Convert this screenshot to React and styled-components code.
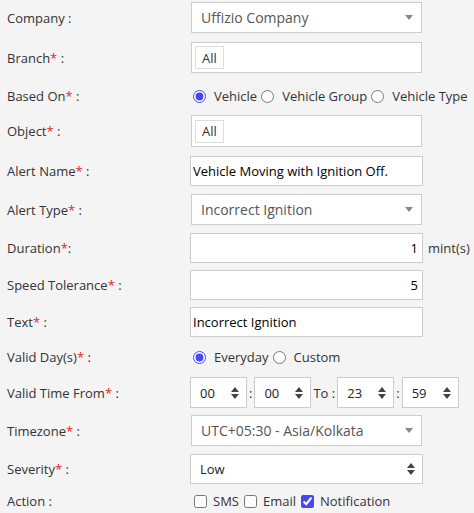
import React from 'react';
import styled, { createGlobalStyle } from 'styled-components';

const GlobalStyle = createGlobalStyle`
  html, body {
    margin: 0;
    padding: 0;
    background: #f4f4f4;
  }
  body {
    font-family: "Open Sans", "Liberation Sans", sans-serif;
    color: #333;
  }
`;

const Caret = () => (
  <svg width="8" height="5" viewBox="0 0 8 5">
    <path d="M0 0h8L4 5z" fill="#888" />
  </svg>
);

const UpDown = () => (
  <svg width="8" height="12" viewBox="0 0 8 12">
    <path d="M4 0l4 5H0z M4 12L0 7h8z" fill="#444" />
  </svg>
);

const Label = ({ children, req, tight }) => (
  <LabelCell>
    {children}
    {req && <Star>*</Star>}
    {tight ? ':' : ' :'}
  </LabelCell>
);

export default function App() {
  return (
    <>
      <GlobalStyle />
      <Form>
        <Row $h={31} $mb={9}>
          <Label>Company</Label>
          <SelectBox>
            <span>Uffizio Company</span>
            <Caret />
          </SelectBox>
        </Row>

        <Row $h={31} $mb={13}>
          <Label req>Branch</Label>
          <TagBox>
            <Tag>All</Tag>
          </TagBox>
        </Row>

        <Row $h={20} $mb={9}>
          <Label req>Based On</Label>
          <Choices>
            <Choice><Radio type="radio" name="based" defaultChecked />Vehicle</Choice>
            <Choice><Radio type="radio" name="based" />Vehicle Group</Choice>
            <Choice><Radio type="radio" name="based" />Vehicle Type</Choice>
          </Choices>
        </Row>

        <Row $h={32} $mb={9}>
          <Label req>Object</Label>
          <TagBox>
            <Tag>All</Tag>
          </TagBox>
        </Row>

        <Row $h={30} $mb={8}>
          <Label req>Alert Name</Label>
          <TextInput defaultValue="Vehicle Moving with Ignition Off." />
        </Row>

        <Row $h={31} $mb={8}>
          <Label req>Alert Type</Label>
          <SelectBox>
            <span>Incorrect Ignition</span>
            <Caret />
          </SelectBox>
        </Row>

        <Row $h={30} $mb={7}>
          <Label req tight>Duration</Label>
          <TextInput $right defaultValue="1" />
          <Unit>mint(s)</Unit>
        </Row>

        <Row $h={30} $mb={7}>
          <Label req>Speed Tolerance</Label>
          <TextInput $right defaultValue="5" />
        </Row>

        <Row $h={30} $mb={10}>
          <Label req>Text</Label>
          <TextInput defaultValue="Incorrect Ignition" />
        </Row>

        <Row $h={20} $mb={10}>
          <Label req>Valid Day(s)</Label>
          <Choices>
            <Choice><Radio type="radio" name="day" defaultChecked />Everyday</Choice>
            <Choice><Radio type="radio" name="day" />Custom</Choice>
          </Choices>
        </Row>

        <Row $h={31} $mb={7}>
          <Label req>Valid Time From</Label>
          <TimeGroup>
            <TimeBox><span>00</span><UpDown /></TimeBox>
            <Sep>:</Sep>
            <TimeBox><span>00</span><UpDown /></TimeBox>
            <Sep>To :</Sep>
            <TimeBox><span>23</span><UpDown /></TimeBox>
            <Sep>:</Sep>
            <TimeBox><span>59</span><UpDown /></TimeBox>
          </TimeGroup>
        </Row>

        <Row $h={31} $mb={8}>
          <Label req>Timezone</Label>
          <SelectBox>
            <span>UTC+05:30 - Asia/Kolkata</span>
            <Caret />
          </SelectBox>
        </Row>

        <Row $h={30} $mb={7}>
          <Label req>Severity</Label>
          <NativeBox>
            <span>Low</span>
            <UpDown />
          </NativeBox>
        </Row>

        <Row $h={20} $mb={0}>
          <Label>Action</Label>
          <Choices>
            <Choice $gap={6}><Check type="checkbox" />SMS</Choice>
            <Choice $gap={6}><Check type="checkbox" />Email</Choice>
            <Choice $gap={6}><Check type="checkbox" defaultChecked />Notification</Choice>
          </Choices>
        </Row>
      </Form>
    </>
  );
}

const Form = styled.div`
  padding: 2px 0 0 7px;
  display: flex;
  flex-direction: column;
`;

const Row = styled.div`
  display: flex;
  align-items: center;
  height: ${p => p.$h}px;
  margin-bottom: ${p => p.$mb}px;
`;

const LabelCell = styled.div`
  width: 183px;
  flex-shrink: 0;
  font-size: 13px;
  color: #333;
  white-space: pre;
`;

const Star = styled.span`
  color: #e8232b;
`;

const SelectBox = styled.div`
  box-sizing: border-box;
  width: 231px;
  height: 100%;
  margin-left: 1px;
  background: #fff;
  border: 1px solid #ccc;
  display: flex;
  align-items: center;
  justify-content: space-between;
  padding: 0 8px 0 9px;
  font-size: 14px;
  color: #555;
`;

const TagBox = styled.div`
  box-sizing: border-box;
  width: 231px;
  height: 100%;
  margin-left: 1px;
  background: #fff;
  border: 1px solid #ccc;
  display: flex;
  align-items: center;
  padding: 0 3px;
`;

const Tag = styled.span`
  box-sizing: border-box;
  height: 23px;
  padding: 0 6px;
  border: 1px solid #ddd;
  font-size: 13px;
  color: #333;
  display: flex;
  align-items: center;
`;

const TextInput = styled.input`
  box-sizing: border-box;
  width: 233px;
  height: 100%;
  background: #fff;
  border: 1px solid #ccc;
  margin: 0;
  padding: 0 ${p => (p.$right ? '4px' : '2px')};
  font-family: "Open Sans", "Liberation Sans", sans-serif;
  font-size: 13px;
  color: #000;
  text-align: ${p => (p.$right ? 'right' : 'left')};
  outline: none;
`;

const Unit = styled.span`
  margin-left: 5px;
  font-size: 13px;
  color: #333;
`;

const Choices = styled.div`
  display: flex;
  align-items: center;
  gap: 4px;
  margin-left: 3px;
`;

const Choice = styled.label`
  display: flex;
  align-items: center;
  gap: ${p => p.$gap || 8}px;
  font-size: 13px;
  color: #333;
`;

const Radio = styled.input`
  margin: 0;
  width: 13px;
  height: 13px;
  accent-color: #4646f5;
`;

const Check = styled.input`
  margin: 0 0 0 1px;
  width: 13px;
  height: 13px;
  accent-color: #4646f5;
`;

const TimeGroup = styled.div`
  display: flex;
  align-items: center;
  height: 100%;
`;

const TimeBox = styled.div`
  box-sizing: border-box;
  width: 57px;
  height: 100%;
  background: #fff;
  border: 1px solid #ccc;
  display: flex;
  align-items: center;
  justify-content: space-between;
  padding: 0 7px 0 9px;
  font-size: 13px;
  color: #222;
`;

const Sep = styled.span`
  padding: 0 2px;
  font-size: 13px;
  color: #333;
`;

const NativeBox = styled.div`
  box-sizing: border-box;
  width: 233px;
  height: 100%;
  background: #fff;
  border: 1px solid #ccc;
  display: flex;
  align-items: center;
  justify-content: space-between;
  padding: 0 7px 0 9px;
  font-size: 13px;
  color: #222;
`;
